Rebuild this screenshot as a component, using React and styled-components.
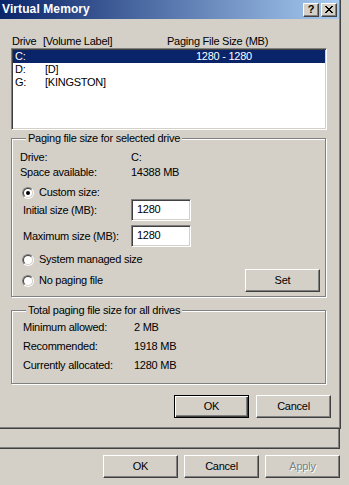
import React from 'react';
import styled, { createGlobalStyle } from 'styled-components';

const FACE = '#d4d0c8';
const SHADOW = '#808080';
const DARK = '#404040';

const GlobalStyle = createGlobalStyle`
  html, body {
    margin: 0;
    padding: 0;
    background: ${FACE};
  }
  body {
    font-family: "Liberation Sans", Arial, sans-serif;
    font-size: 11px;
    line-height: 13px;
    letter-spacing: -0.25px;
    color: #000;
  }
  * {
    box-sizing: border-box;
  }
`;

const Screen = styled.div`
  width: 349px;
  height: 485px;
  overflow: hidden;
  background: ${FACE};
  display: flex;
  flex-direction: column;
`;

const Dialog = styled.div`
  width: 341px;
  height: 429px;
  border-right: 1px solid ${DARK};
  border-bottom: 1px solid ${DARK};
  box-shadow: inset -1px -1px 0 ${SHADOW};
  display: flex;
  flex-direction: column;
`;

const TitleBar = styled.div`
  height: 19px;
  margin-right: 1px;
  padding: 0 2px 0 2px;
  background: linear-gradient(to right, #0a246a, #a6caf0);
  display: flex;
  align-items: center;
  gap: 2px;
`;

const Title = styled.div`
  flex: 1;
  color: #fff;
  font-weight: bold;
  font-size: 12px;
  letter-spacing: 0.1px;
`;

const CaptionButton = styled.div`
  width: 16px;
  height: 14px;
  background: ${FACE};
  border: 1px solid;
  border-color: #fff ${DARK} ${DARK} #fff;
  box-shadow: inset -1px -1px 0 ${SHADOW};
  display: flex;
  align-items: center;
  justify-content: center;
  font-weight: bold;
  font-size: 11px;
  line-height: 11px;
  padding-bottom: 1px;
`;

const Body = styled.div`
  padding: 16px 0 0 11px;
  display: flex;
  flex-direction: column;
`;

const HeaderRow = styled.div`
  display: grid;
  grid-template-columns: 31px 124px 1fr;
  padding-left: 1px;
  height: 13px;
`;

const ListBox = styled.div`
  width: 316px;
  height: 82px;
  background: #fff;
  border: 1px solid;
  border-color: ${SHADOW} #fff #fff ${SHADOW};
  box-shadow: inset 1px 1px 0 ${DARK}, inset -1px -1px 0 ${FACE};
  padding: 1px 1px;
`;

const ListRow = styled.div`
  display: grid;
  grid-template-columns: 30px 151px 1fr;
  height: 13px;
  padding-left: 2px;
  background: ${(p) => (p.$selected ? '#0a246a' : 'transparent')};
  color: ${(p) => (p.$selected ? '#fff' : '#000')};
`;

const Group = styled.fieldset`
  margin: ${(p) => p.$top}px 0 0 0;
  width: 315px;
  height: ${(p) => p.$height}px;
  border: 1px solid ${SHADOW};
  box-shadow: inset 1px 1px 0 #fff, 1px 1px 0 #fff;
  padding: ${(p) => p.$padTop}px 5px 0 8px;
  min-width: 0;
`;

const Legend = styled.legend`
  margin-left: 6px;
  padding: 0 2px;
  background: ${FACE};
  line-height: 13px;
`;

const InfoGrid = styled.div`
  display: grid;
  grid-template-columns: 111px 1fr;
  row-gap: ${(p) => p.$gap}px;
  padding-left: ${(p) => p.$indent || 0}px;
`;

const RadioRow = styled.div`
  display: flex;
  align-items: center;
  justify-content: space-between;
  height: ${(p) => p.$height || 13}px;
  margin-top: ${(p) => p.$top}px;
`;

const RadioLabel = styled.label`
  display: flex;
  align-items: center;
  gap: 5px;
  padding-left: 2px;
`;

const RadioOuter = styled.span`
  width: 12px;
  height: 12px;
  border-radius: 50%;
  border: 1px solid;
  border-color: ${SHADOW} #fff #fff ${SHADOW};
  display: flex;
`;

const RadioInner = styled.span`
  flex: 1;
  border-radius: 50%;
  border: 1px solid;
  border-color: ${DARK} ${FACE} ${FACE} ${DARK};
  background: #fff;
  display: flex;
  align-items: center;
  justify-content: center;

  &::after {
    content: '';
    width: 4px;
    height: 4px;
    border-radius: 50%;
    background: ${(p) => (p.$checked ? '#000' : 'transparent')};
  }
`;

const FieldRow = styled.div`
  display: grid;
  grid-template-columns: 108px 60px;
  align-items: center;
  padding-left: 3px;
  margin-top: ${(p) => p.$top}px;
`;

const Edit = styled.div`
  width: 60px;
  height: 22px;
  background: #fff;
  border: 1px solid;
  border-color: ${SHADOW} #fff #fff ${SHADOW};
  box-shadow: inset 1px 1px 0 ${DARK}, inset -1px -1px 0 ${FACE};
  padding: 3px 0 0 5px;
`;

const Button = styled.div`
  width: 75px;
  height: ${(p) => p.$height || 23}px;
  display: flex;
  align-items: center;
  justify-content: center;
  background: ${FACE};
  border: 1px solid;
  border-color: ${(p) => (p.$default ? '#000' : `#fff ${DARK} ${DARK} #fff`)};
  box-shadow: ${(p) => (p.$default
    ? `inset 1px 1px 0 #fff, inset -1px -1px 0 ${DARK}, inset -2px -2px 0 ${SHADOW}`
    : `inset -1px -1px 0 ${SHADOW}`)};
  color: ${(p) => (p.$disabled ? SHADOW : '#000')};
  text-shadow: ${(p) => (p.$disabled ? '1px 1px 0 #fff' : 'none')};
`;

const ButtonRow = styled.div`
  display: flex;
  justify-content: flex-end;
  gap: ${(p) => p.$gap}px;
  width: ${(p) => p.$width}px;
  margin-top: ${(p) => p.$top}px;
`;

const TabTail = styled.div`
  width: 340px;
  height: 20px;
  border-right: 1px solid ${DARK};
  border-bottom: 1px solid ${DARK};
  box-shadow: inset -1px -1px 0 ${SHADOW};
`;

const CloseGlyph = () => (
  <svg width="8" height="7" viewBox="0 0 8 7" shapeRendering="crispEdges">
    <path
      d="M0 0h2v1h-2zM6 0h2v1h-2zM1 1h2v1h-2zM5 1h2v1h-2zM2 2h4v1h-4zM3 3h2v1h-2zM2 4h4v1h-4zM1 5h2v1h-2zM5 5h2v1h-2zM0 6h2v1h-2zM6 6h2v1h-2z"
      fill="#000"
    />
  </svg>
);

const Radio = ({ checked, children }) => (
  <RadioLabel>
    <RadioOuter>
      <RadioInner $checked={checked} />
    </RadioOuter>
    {children}
  </RadioLabel>
);

const drives = [
  { letter: 'C:', label: '', size: '1280 - 1280', selected: true },
  { letter: 'D:', label: '[D]', size: '' },
  { letter: 'G:', label: '[KINGSTON]', size: '' },
];

export default function App() {
  return (
    <Screen>
      <GlobalStyle />
      <Dialog>
        <TitleBar>
          <Title>Virtual Memory</Title>
          <CaptionButton>?</CaptionButton>
          <CaptionButton>
            <CloseGlyph />
          </CaptionButton>
        </TitleBar>
        <Body>
          <HeaderRow>
            <span>Drive</span>
            <span>[Volume Label]</span>
            <span>Paging File Size (MB)</span>
          </HeaderRow>
          <ListBox>
            {drives.map((d) => (
              <ListRow key={d.letter} $selected={d.selected}>
                <span>{d.letter}</span>
                <span>{d.label}</span>
                <span>{d.size}</span>
              </ListRow>
            ))}
          </ListBox>

          <Group $top={2} $height={165} $padTop={6}>
            <Legend>Paging file size for selected drive</Legend>
            <InfoGrid $gap={2}>
              <span>Drive:</span>
              <span>C:</span>
              <span>Space available:</span>
              <span>14388 MB</span>
            </InfoGrid>
            <RadioRow $top={7}>
              <Radio checked>Custom size:</Radio>
            </RadioRow>
            <FieldRow $top={0}>
              <span>Initial size (MB):</span>
              <Edit>1280</Edit>
            </FieldRow>
            <FieldRow $top={4}>
              <span>Maximum size (MB):</span>
              <Edit>1280</Edit>
            </FieldRow>
            <RadioRow $top={6}>
              <Radio>System managed size</Radio>
            </RadioRow>
            <RadioRow $top={3} $height={23}>
              <Radio>No paging file</Radio>
              <Button>Set</Button>
            </RadioRow>
          </Group>

          <Group $top={7} $height={80} $padTop={4}>
            <Legend>Total paging file size for all drives</Legend>
            <InfoGrid $gap={6} $indent={3}>
              <span>Minimum allowed:</span>
              <span>2 MB</span>
              <span>Recommended:</span>
              <span>1918 MB</span>
              <span>Currently allocated:</span>
              <span>1280 MB</span>
            </InfoGrid>
          </Group>

          <ButtonRow $gap={7} $width={320} $top={11}>
            <Button $default>OK</Button>
            <Button>Cancel</Button>
          </ButtonRow>
        </Body>
      </Dialog>
      <TabTail />
      <ButtonRow $gap={6} $width={340} $top={6}>
        <Button>OK</Button>
        <Button>Cancel</Button>
        <Button $disabled>Apply</Button>
      </ButtonRow>
    </Screen>
  );
}
